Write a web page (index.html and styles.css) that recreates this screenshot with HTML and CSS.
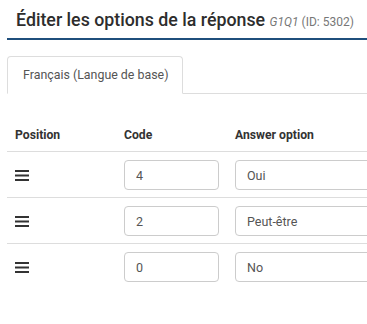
FILE: index.html
```html
<!DOCTYPE html>
<html lang="fr">
<head>
    <meta charset="UTF-8">
    <title>Éditer les options de la réponse</title>
    <link rel="stylesheet" href="styles.css">
</head>
<body>
    <div class="editor">
        <div class="editor-header">
            <h2>Éditer les options de la réponse <small><em>G1Q1</em> (ID: 5302)</small></h2>
        </div>

        <ul class="tabs">
            <li class="tab active">Français (Langue de base)</li>
        </ul>

        <table class="answers">
            <thead>
                <tr>
                    <th class="col-pos">Position</th>
                    <th class="col-code">Code</th>
                    <th>Answer option</th>
                </tr>
            </thead>
            <tbody>
                <tr>
                    <td><span class="handle"><svg width="14" height="12" viewBox="0 0 14 12"><rect y="1" width="14" height="2"/><rect y="5.5" width="14" height="2"/><rect y="10" width="14" height="2"/></svg></span></td>
                    <td><input class="code-input" type="text" value="4"></td>
                    <td><input class="answer-input" type="text" value="Oui"></td>
                </tr>
                <tr>
                    <td><span class="handle"><svg width="14" height="12" viewBox="0 0 14 12"><rect y="1" width="14" height="2"/><rect y="5.5" width="14" height="2"/><rect y="10" width="14" height="2"/></svg></span></td>
                    <td><input class="code-input" type="text" value="2"></td>
                    <td><input class="answer-input" type="text" value="Peut-être"></td>
                </tr>
                <tr>
                    <td><span class="handle"><svg width="14" height="12" viewBox="0 0 14 12"><rect y="1" width="14" height="2"/><rect y="5.5" width="14" height="2"/><rect y="10" width="14" height="2"/></svg></span></td>
                    <td><input class="code-input" type="text" value="0"></td>
                    <td><input class="answer-input" type="text" value="No"></td>
                </tr>
            </tbody>
        </table>
    </div>
</body>
</html>
```

FILE: styles.css
```css
html, body {
    margin: 0;
    overflow: hidden;
    background: #fff;
}
.editor {
    font-family: Roboto, 'Liberation Sans', sans-serif;
    color: #333;
    width: 640px;
    padding-left: 7px;
}
.editor-header {
    border-bottom: 2px solid #1f4f7c;
    padding: 9px 9px 5px;
}
h2 {
    margin: 0;
    font-size: 17.8px;
    font-weight: 500;
    line-height: 22px;
    color: #2d2d2d;
}
h2 small {
    font-size: 12px;
    font-weight: 400;
    color: #777;
}
.tabs {
    list-style: none;
    margin: 16px 0 0;
    padding: 0;
    display: flex;
    border-bottom: 1px solid #ddd;
}
.tab {
    padding: 0 14px 0 15px;
    height: 36px;
    line-height: 36px;
    font-size: 12.4px;
    color: #555;
    border: 1px solid #ddd;
    border-bottom-color: transparent;
    border-radius: 4px 4px 0 0;
    margin-bottom: -1px;
    background: #fff;
}
.answers {
    border-collapse: collapse;
    width: 100%;
    margin-top: 20px;
}
.answers th {
    text-align: left;
    font-size: 12.2px;
    font-weight: 700;
    padding: 14px 8px 9px;
    border-bottom: 1px solid #ddd;
}
.answers td {
    padding: 8px 8px 7px;
    border-bottom: 1px solid #ddd;
    vertical-align: middle;
}
.answers tr:last-child td {
    border-bottom: none;
}
.col-pos {
    width: 93px;
}
.col-code {
    width: 93px;
}
.handle svg {
    display: block;
    fill: #333;
}
input {
    box-sizing: border-box;
    height: 30px;
    border: 1px solid #ccc;
    border-radius: 4px;
    font-family: Roboto, 'Liberation Sans', sans-serif;
    font-size: 12.5px;
    color: #555;
    padding: 0 11px;
}
.code-input {
    width: 95px;
}
.answer-input {
    width: 300px;
}
```
